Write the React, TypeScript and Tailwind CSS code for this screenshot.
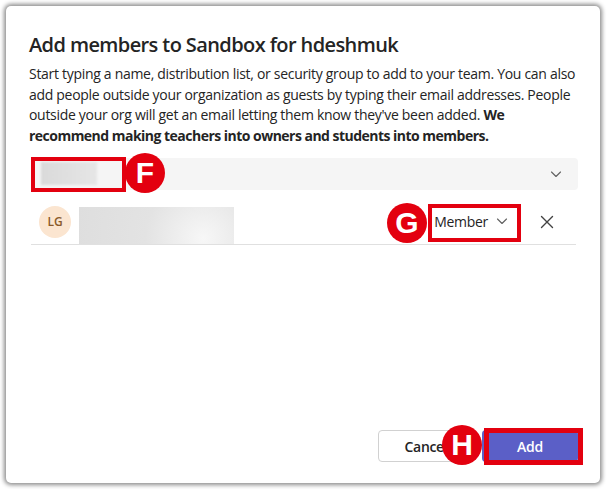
import React from "react";

const F = { fontFamily: '"Open Sans", "Noto Sans", sans-serif' };

function Badge({ letter, className }: { letter: string; className: string }) {
  return (
    <div
      className={`absolute w-[40px] h-[40px] rounded-full bg-[#e3000f] text-white flex items-center justify-center text-[30px] font-bold leading-none ${className}`}
      style={{ fontFamily: '"Liberation Sans", Arial, sans-serif' }}
    >
      {letter}
    </div>
  );
}

function Chevron({ className }: { className?: string }) {
  return (
    <svg className={className} width="12" height="12" viewBox="0 0 12 12" fill="none">
      <path d="M1.5 4 L6 8.5 L10.5 4" stroke="#616161" strokeWidth="1.1" strokeLinecap="round" strokeLinejoin="round" />
    </svg>
  );
}

export default function App() {
  return (
    <div className="w-[610px] h-[489px] bg-white relative overflow-hidden text-[#242424]" style={F}>
      <div className="ml-[6px] mt-[6px] w-[594px] h-[477px] bg-white rounded-[5px] shadow-[0_0_4px_2px_rgba(0,0,0,0.45)] flex flex-col pl-[23px] pr-[22px] pt-[25px] pb-[21px]">
        <h1 className="text-[20px] leading-[28px] font-semibold tracking-[-0.6px]">Add members to Sandbox for hdeshmuk</h1>
        <p className="mt-[5px] text-[14px] leading-[20.7px] whitespace-nowrap tracking-[-0.3px]">
          Start typing a name, distribution list, or security group to add to your team. You can also
          <br />
          add people outside your organization as guests by typing their email addresses. People
          <br />
          outside your org will get an email letting them know they've been added. <b className="tracking-[-0.5px]">We</b>
          <br />
          <b className="tracking-[-0.52px]">recommend making teachers into owners and students into members.</b>
        </p>
        <div className="mt-[11px] ml-[2px] h-[32px] rounded-[4px] bg-[#f5f5f5] flex items-center pl-[10px] pr-[16px]">
          <div className="w-[56px] h-[23px] bg-gradient-to-r from-[#dadada] to-[#e6e6e6] blur-[1px]" />
          <div className="flex-1" />
          <Chevron />
        </div>
        <div className="mt-[10px] ml-[2px] mr-[2px] h-[45px] border-b border-[#e0e0e0] flex items-center">
          <div className="ml-[8px] w-[32px] h-[32px] rounded-full bg-[#fbe5d0] text-[#8a5a2b] text-[12px] font-semibold flex items-center justify-center">
            LG
          </div>
          <div className="ml-[8px] self-end w-[155px] h-[37px] bg-[radial-gradient(circle_at_80%_85%,#f7f7f7_0%,#e3e3e3_45%,#dedede_100%)]" />
          <div className="flex-1" />
          <div className="flex items-center gap-[8px] mr-[8px] -mt-[1px]">
            <span className="text-[14px] tracking-[-0.3px]">Member</span>
            <Chevron />
          </div>
          <svg className="ml-[24px] mr-[22px]" width="14" height="14" viewBox="0 0 14 14">
            <path d="M1.5 1.5 L12.5 12.5 M12.5 1.5 L1.5 12.5" stroke="#424242" strokeWidth="1.4" strokeLinecap="round" />
          </svg>
        </div>
        <div className="mt-auto flex justify-end gap-[8px]">
          <button className="w-[96px] h-[32px] rounded-[4px] border border-[#d1d1d1] bg-white text-[14px] font-semibold text-[#242424] tracking-[-0.3px]">
            Cancel
          </button>
          <button className="w-[96px] h-[32px] rounded-[4px] bg-[#5b5fc7] text-[14px] font-semibold text-white tracking-[-0.3px]">
            Add
          </button>
        </div>
      </div>

      {/* annotations */}
      <div className="absolute left-[31px] top-[157px] w-[95px] h-[35px] border-[4px] border-[#e3000f]" />
      <Badge letter="F" className="left-[125px] top-[153px]" />
      <div className="absolute left-[428px] top-[204px] w-[93px] h-[38px] border-[4px] border-[#e3000f]" />
      <Badge letter="G" className="left-[387px] top-[203px]" />
      <div className="absolute left-[484px] top-[428px] w-[99px] h-[37px] border-[5px] border-[#e3000f]" />
      <Badge letter="H" className="left-[442px] top-[425px]" />
    </div>
  );
}
